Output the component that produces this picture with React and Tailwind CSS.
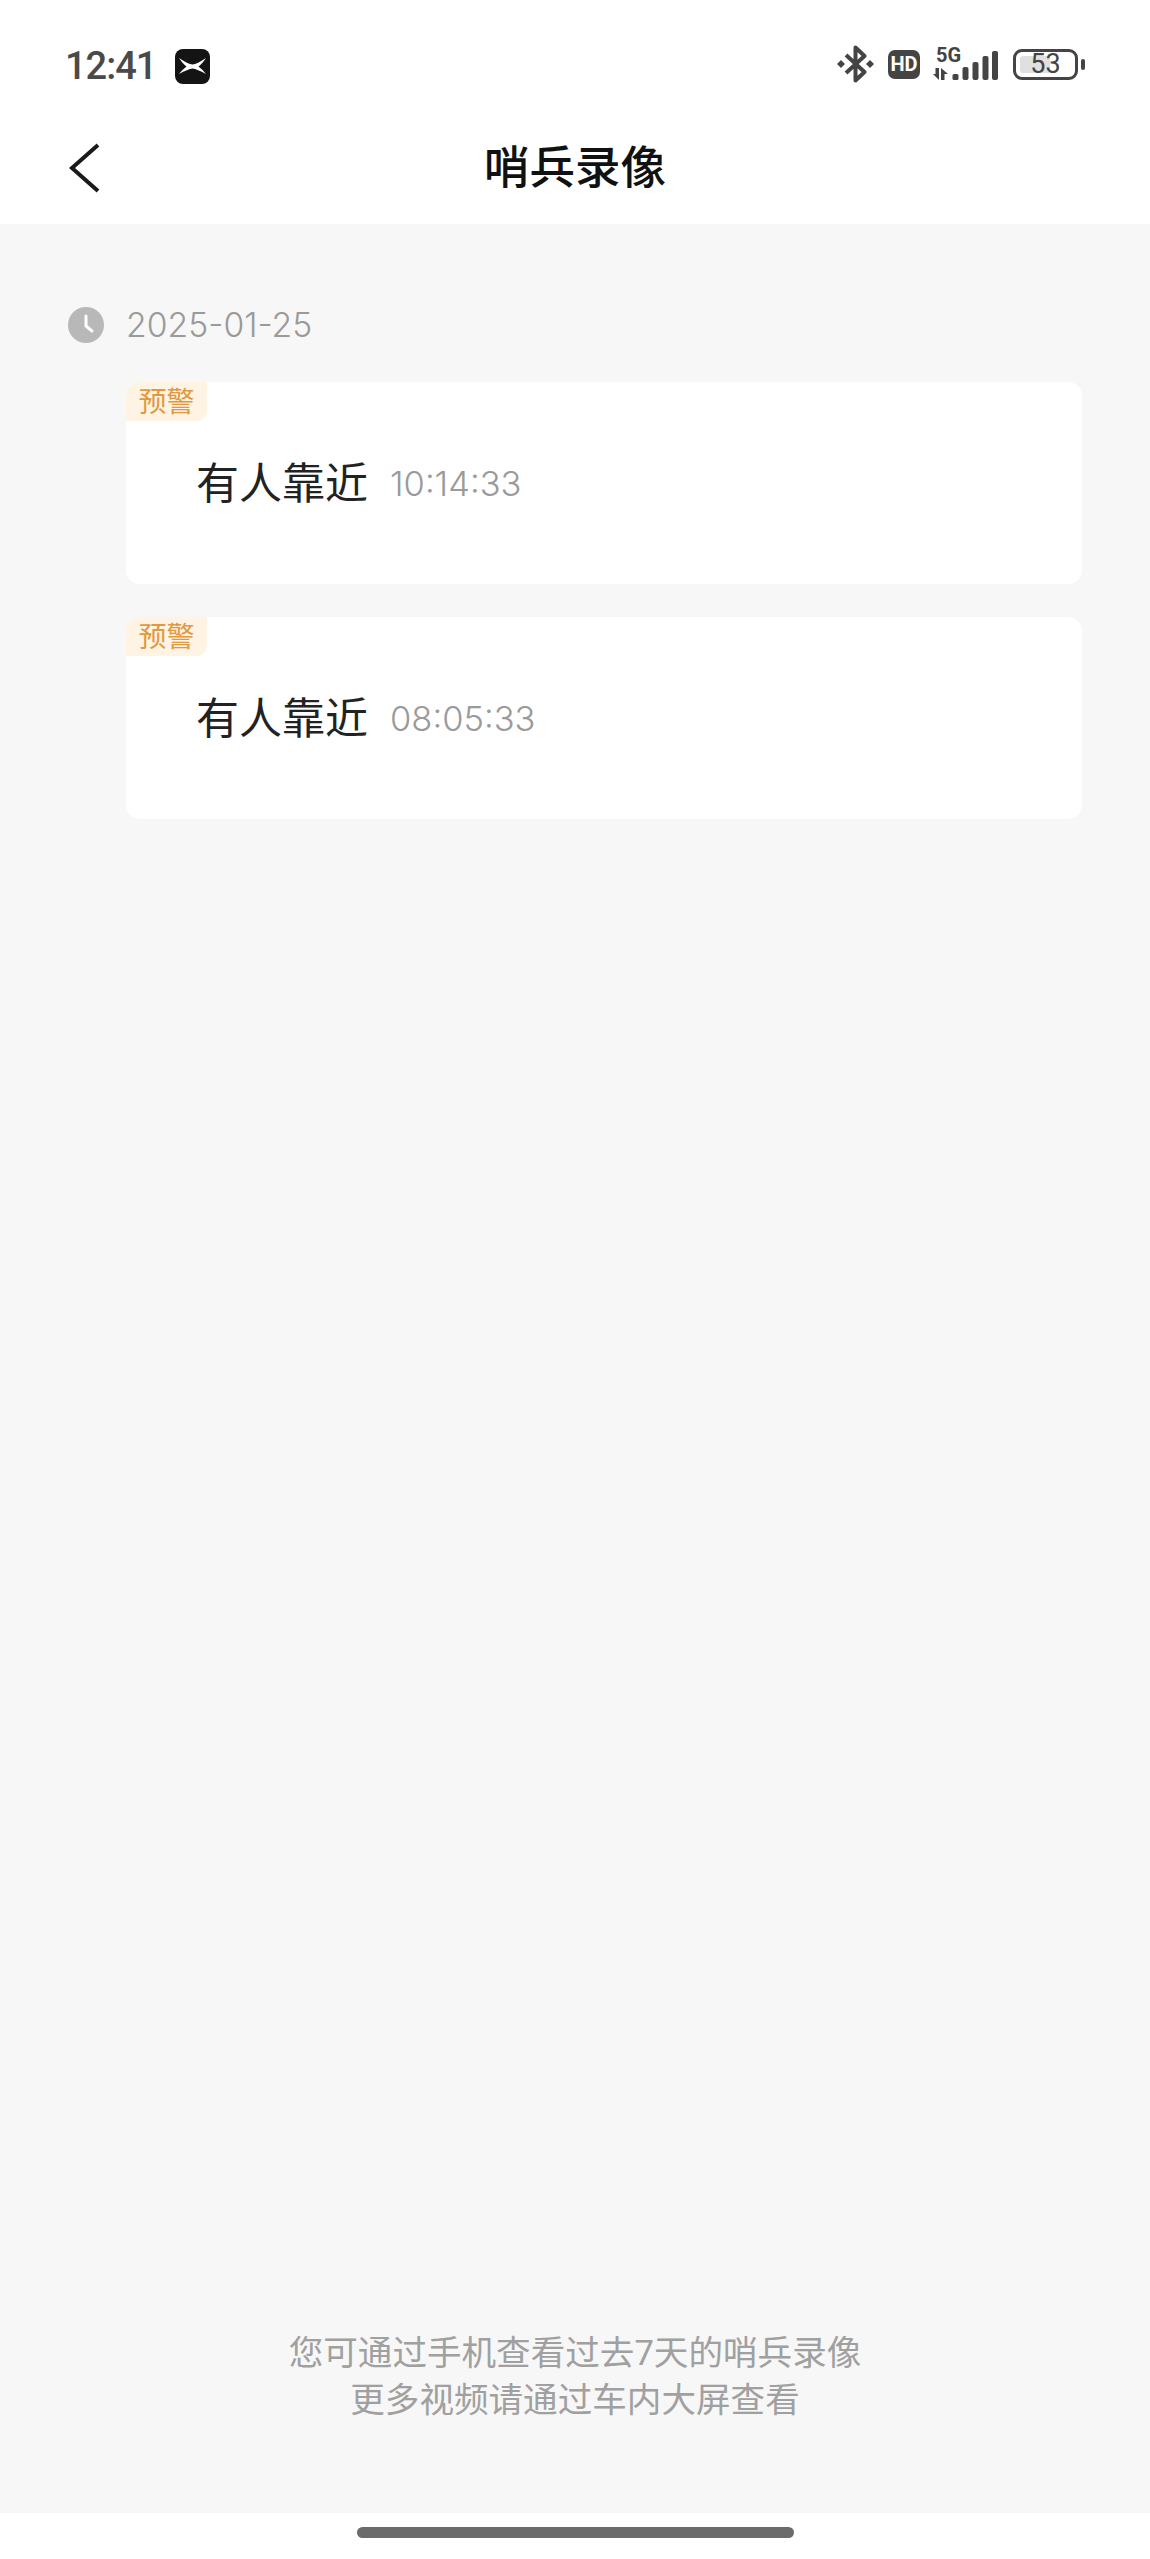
// Sentry recording list screen, phone layout
const cjk = "font-['Roboto','Noto_Sans_CJK_SC',sans-serif]";

const records = [
  { id: 1, title: '有人靠近', time: '10:14:33' },
  { id: 2, title: '有人靠近', time: '08:05:33' },
];

const StatusBar = () => (
  <div className="flex h-[128px] shrink-0 items-start justify-between pl-[65px] pr-[65px] pt-[45px]">
    <div className="mt-[2px] flex h-[38px] items-center gap-[19px]">
      <span className="font-['Roboto',sans-serif] text-[38px] leading-[38px] font-medium tracking-[-1px] text-[#4a4a4a]">12:41</span>
      <svg width="35" height="35" viewBox="0 0 35 35">
        <rect width="35" height="35" rx="8" fill="#141414" />
        <path d="M4 9 Q13 15 17.5 15.5 Q22 15 31 9 Q27 15 23.5 17.5 Q27 20 31 25 Q22 20 17.5 19.5 Q13 20 4 25 Q8 20 11.5 17.5 Q8 15 4 9Z" fill="#fff" />
      </svg>
    </div>
    <div className="flex items-center">
      <svg width="37" height="38" viewBox="0 0 37 38" fill="none" stroke="#444444">
        <path d="M9 10 L27.5 27 L18.5 35.5 L18.5 2.5 L27.5 11 L9 28" strokeWidth="4" strokeLinejoin="round" />
        <path d="M4 15 L8 19 L4 23 L0 19Z M33 15 L37 19 L33 23 L29 19Z" fill="#444444" stroke="none" />
      </svg>
      <div className="ml-[14px] flex h-[29px] w-[32px] items-center justify-center rounded-[7px] bg-[#444444] font-['Roboto',sans-serif] text-[20px] font-bold text-white">HD</div>
      <div className="relative ml-[13px] h-[33px] w-[65px]">
        <span className="absolute left-[3px] top-0 font-['Roboto',sans-serif] text-[20px] leading-[15px] font-bold text-[#444444]">5G</span>
        <svg className="absolute left-0 top-0" width="65" height="33" viewBox="0 0 65 33" fill="#444444">
          <path d="M0 26 H2.5 V20 H6 V32Z M8 32 V20 L15 26 H11.5 V32Z" />
          <rect x="19.5" y="26" width="6" height="6" rx="1.5" />
          <rect x="29.5" y="19" width="6" height="13" rx="2" />
          <rect x="39.5" y="14" width="6" height="18" rx="2" />
          <rect x="49.5" y="8" width="6" height="24" rx="2" />
          <rect x="59" y="3" width="6" height="29" rx="2" />
        </svg>
      </div>
      <div className="relative ml-[15px] flex h-[31px] w-[65px] items-center justify-center rounded-[9px] border-[3px] border-[#444444]">
        <div className="absolute left-[4px] top-[4px] bottom-[4px] w-[30px] rounded-l-[3px] bg-[#e0e0e0]" />
        <span className="relative font-['Roboto',sans-serif] text-[27px] leading-none text-[#444444]">53</span>
      </div>
      <div className="ml-[3px] h-[11px] w-[4px] rounded-[2px] bg-[#444444]" />
    </div>
  </div>
);

const NavBar = () => (
  <div className="relative flex h-[96px] shrink-0 items-center justify-center">
    <svg className="absolute left-[68px] top-[14px]" width="34" height="52" viewBox="0 0 34 52" fill="none" stroke="#1a1a1a" strokeWidth="4">
      <path d="M30 3 L4 26 L30 49" />
    </svg>
    <h1 className={`${cjk} -mt-[15px] text-[45.5px] font-medium leading-[60px] text-[#111111]`}>哨兵录像</h1>
  </div>
);

const RecordCard = ({ title, time }) => (
  <div className="relative h-[202px] rounded-[14px] bg-white pl-[70px] pt-[72px]">
    <div className={`${cjk} absolute left-0 top-0 flex h-[39px] w-[81px] items-center justify-center rounded-tl-[14px] rounded-br-[10px] bg-[#fff3e3] pt-[3px] text-[28px] leading-none text-[#e0993f]`}>预警</div>
    <div className="flex items-center gap-[22px]">
      <span className={`${cjk} text-[43px] leading-[60px] text-[#222222]`}>{title}</span>
      <span className="font-['Inter',sans-serif] text-[34.5px] font-light leading-[40px] text-[#9a9a9a]">{time}</span>
    </div>
  </div>
);

export default function App() {
  return (
    <div className="flex h-[2559px] w-[1150px] flex-col bg-white">
      <StatusBar />
      <NavBar />
      <main className="flex flex-1 flex-col bg-[#f7f7f7] pt-[83px]">
        <div className="flex items-center pl-[68px]">
          <svg width="36" height="36" viewBox="0 0 36 36">
            <circle cx="18" cy="18" r="18" fill="#b8b8b8" />
            <path d="M18 9 V19 L24 24" fill="none" stroke="#fff" strokeWidth="3" strokeLinecap="round" />
          </svg>
          <span className="ml-[22px] font-['Inter',sans-serif] text-[33.7px] font-light leading-[36px] text-[#9a9a9a]">2025-01-25</span>
        </div>
        <div className="ml-[126px] mr-[68px] mt-[39px] flex flex-col gap-[33px]">
          {records.map((r) => (
            <RecordCard key={r.id} title={r.title} time={r.time} />
          ))}
        </div>
        <div className={`${cjk} mt-auto pb-[89px] text-center text-[34.6px] leading-[47px] text-[#a0a0a0]`}>
          <p>您可通过手机查看过去7天的哨兵录像</p>
          <p>更多视频请通过车内大屏查看</p>
        </div>
      </main>
      <div className="flex h-[46px] shrink-0 justify-center pt-[14px]">
        <div className="h-[11px] w-[437px] rounded-full bg-[#6b6b6b]" />
      </div>
    </div>
  );
}
